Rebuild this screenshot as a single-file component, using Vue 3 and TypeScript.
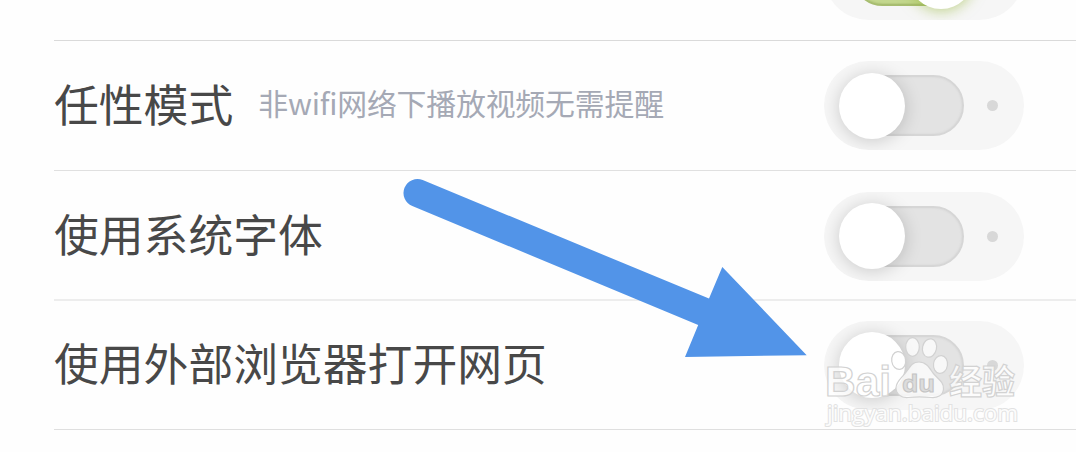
<script setup lang="ts">
interface Setting {
  id: string
  title: string
  hint?: string
  on: boolean
}

const settings: Setting[] = [
  { id: 'previous', title: '', on: true },
  { id: 'mode', title: '任性模式', hint: '非wifi网络下播放视频无需提醒', on: false },
  { id: 'font', title: '使用系统字体', on: false },
  { id: 'browser', title: '使用外部浏览器打开网页', on: false },
]
</script>

<template>
  <main class="screen">
    <ul class="list">
      <li v-for="s in settings" :key="s.id" class="row" :class="s.id">
        <span class="title">{{ s.title }}</span>
        <span v-if="s.hint" class="hint">{{ s.hint }}</span>
        <span class="switch" :class="{ on: s.on }" role="switch" :aria-checked="s.on">
          <span class="track"></span>
          <span class="knob"></span>
          <span v-if="!s.on" class="dot"></span>
        </span>
      </li>
    </ul>

    <svg class="overlay" width="1076" height="452" viewBox="0 0 1076 452">
      <path
        class="arrow"
        d="M422.7 180 L709 298.6 L722.3 267 L806.7 355.2 L685 357 L698.2 325 L412.3 206 A14 14 0 0 1 422.7 180 Z"
      />
      <g class="mark">
        <text class="latin" x="825" y="395.5" textLength="66" lengthAdjust="spacingAndGlyphs">Bai</text>
        <ellipse cx="898.7" cy="360.5" rx="7" ry="9" transform="rotate(-8 898.7 360.5)" />
        <ellipse cx="912.5" cy="347" rx="6.8" ry="9.3" />
        <ellipse cx="929.5" cy="348" rx="7" ry="9.3" transform="rotate(12 929.5 348)" />
        <ellipse cx="940.5" cy="364.5" rx="7" ry="9" transform="rotate(8 940.5 364.5)" />
        <path
          d="M919 362 C926 362 929 367 933 373 C938 379 944 382 943.5 389 C943 396 937 398 931 397.5 C923 396.5 916 396.5 908 397.5 C901 398 896 394 896 388 C896 381 902 378 907 371 C911 365 913 362 919 362 Z"
        />
        <text class="du" x="902" y="392" textLength="33" lengthAdjust="spacingAndGlyphs">du</text>
        <text class="cjk" x="949" y="393.5" textLength="66" lengthAdjust="spacingAndGlyphs">经验</text>
        <text class="url" x="827" y="421" textLength="191" lengthAdjust="spacingAndGlyphs">jingyan.baidu.com</text>
      </g>
    </svg>
  </main>
</template>

<style>
body {
  margin: 0;
  background: #fefefe;
}
</style>

<style scoped>
.screen {
  position: relative;
  width: 1076px;
  height: 452px;
  overflow: hidden;
  background: #fefefe;
  font-family: 'Noto Sans CJK SC', sans-serif;
}

.list {
  margin: -89px 0 0;
  padding: 0 0 0 54px;
  list-style: none;
}

.row {
  box-sizing: border-box;
  display: flex;
  align-items: center;
  height: 130px;
  padding-right: 52px;
  border-bottom: 1px solid #dadada;
}

.row.mode {
  border-bottom-color: #e0e0e0;
}

.row.font {
  padding-top: 2px;
  border-bottom: 2px solid #ededed;
}

.row.browser {
  height: 129px;
  border-bottom-color: #dfdfdf;
}

.title {
  padding-bottom: 6px;
  color: #484848;
  font-size: 44.8px;
  line-height: 64px;
  font-weight: 400;
  white-space: nowrap;
}

.font .title {
  padding-bottom: 7px;
}

.hint {
  margin-left: 25px;
  padding-bottom: 7px;
  color: #a5a9b5;
  font-size: 29.9px;
  line-height: 44px;
  font-weight: 400;
  letter-spacing: -0.2px;
  white-space: nowrap;
}

.switch {
  box-sizing: border-box;
  position: relative;
  display: flex;
  align-items: center;
  width: 200px;
  height: 89px;
  margin-left: auto;
  padding-left: 20px;
  border-radius: 45px;
  background: #f6f6f6;
  overflow: hidden;
}

.track {
  box-sizing: border-box;
  width: 120px;
  height: 61px;
  border: 2px solid #d6d6d6;
  border-radius: 31px;
  background: #e3e3e3;
  box-shadow: inset 0 0 2px #d3d3d3;
}

.knob {
  width: 66px;
  height: 66px;
  margin-left: -125px;
  border-radius: 50%;
  background: #fff;
  box-shadow: 0 2px 18px rgba(0, 0, 0, 0.18);
}

.dot {
  width: 11px;
  height: 11px;
  margin-left: 81.5px;
  border-radius: 50%;
  background: #d8d8d8;
}

.switch.on {
  padding-left: 28px;
}

.on .track {
  border-color: #a7bd70;
  background: #c3d78e;
  box-shadow: inset 0 0 2px #99b05f;
}

.on .knob {
  margin-left: -64px;
  box-shadow: 0 2px 14px rgba(145, 180, 50, 0.55);
}

.overlay {
  position: absolute;
  inset: 0;
  pointer-events: none;
}

.arrow {
  fill: #5294e8;
}

.mark {
  fill: rgba(255, 255, 255, 0.75);
  stroke: #d2d2d2;
  stroke-width: 1.2;
}

.mark text {
  stroke-width: 1.2;
}

.mark .latin {
  font: bold 42px 'Liberation Sans', sans-serif;
}

.mark .du {
  fill: #dcdcdc;
  stroke: #c4c4c4;
  stroke-width: 1;
  font: bold 23px 'Noto Sans', sans-serif;
}

.mark .cjk {
  font: 700 34px 'Noto Sans CJK SC', sans-serif;
}

.mark .url {
  paint-order: stroke;
  fill: #fcfcfc;
  stroke: #e2e2e2;
  stroke-width: 2;
  font: 22px 'Open Sans', sans-serif;
}
</style>
